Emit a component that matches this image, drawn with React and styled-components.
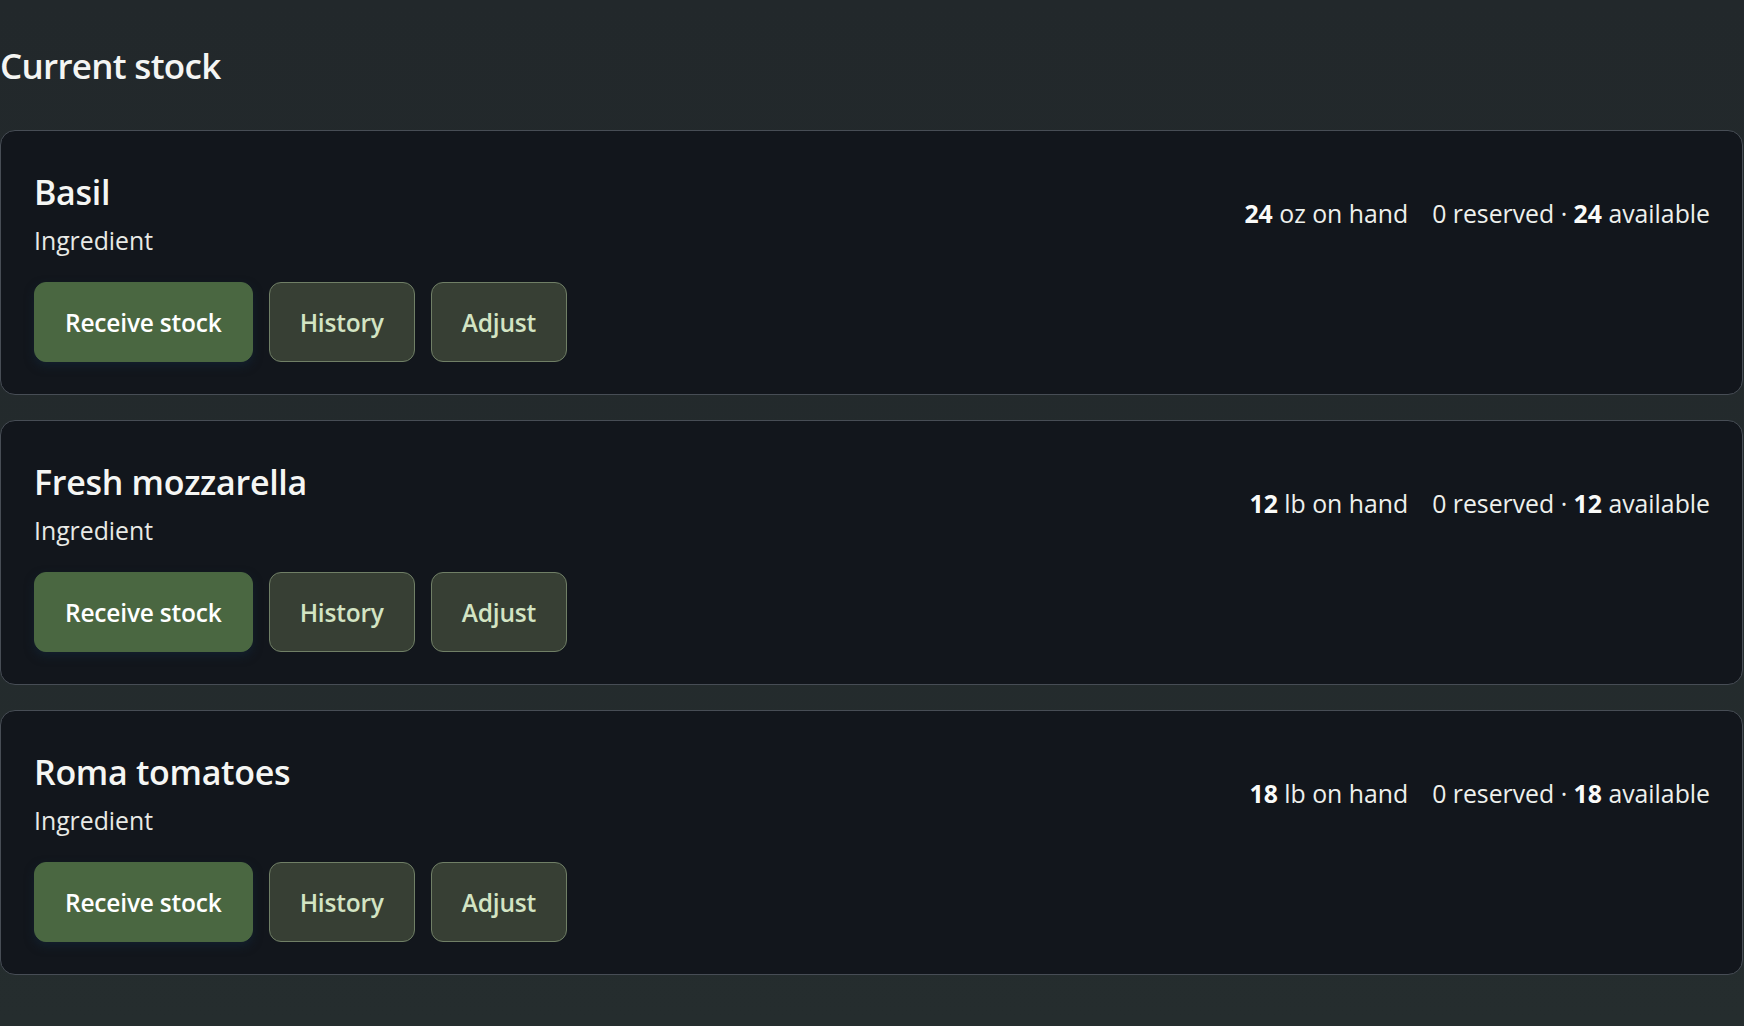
import React from 'react';
import styled, { createGlobalStyle } from 'styled-components';

const GlobalStyle = createGlobalStyle`
    html, body {
        margin: 0;
        padding: 0;
    }
    body {
        min-height: 1026px;
        background: linear-gradient(180deg, #22282b 0%, #252d2e 100%);
        font-family: "Segoe UI", "Open Sans", "Noto Sans", sans-serif;
        color: #f3f4f2;
    }
`

const Page = styled.main`
    padding: 40px 1px 40px 0;
`

const Heading = styled.h2`
    margin: 0 0 39px 0;
    font-size: 35px;
    font-weight: 600;
    line-height: 51px;
    color: #f4f5f3;
    letter-spacing: -0.7px;
`

const List = styled.div`
    display: flex;
    flex-direction: column;
    gap: 25px;
`

const Card = styled.section`
    background: #12161c;
    border: 1.5px solid #474d55;
    border-radius: 15px;
    padding: 38px 32px 32px 33px;
`

const Header = styled.div`
    display: flex;
    align-items: center;
    justify-content: space-between;
`

const NameBlock = styled.div`
    display: flex;
    flex-direction: column;
    gap: 8px;
`

const Name = styled.h3`
    margin: 0;
    font-size: 34px;
    font-weight: 600;
    line-height: 46px;
    color: #f5f6f4;
    letter-spacing: -0.3px;
`

const Kind = styled.div`
    font-size: 24.8px;
    line-height: 34px;
    color: #e8eae6;
`

const Stats = styled.div`
    display: flex;
    gap: 24px;
    font-size: 24.8px;
    line-height: 34px;
    color: #eef0ec;
    b {
        font-weight: 700;
        color: #fafbf9;
    }
`

const Actions = styled.div`
    display: flex;
    gap: 16px;
    margin-top: 25px;
`

const Button = styled.button`
    height: 80px;
    padding: 0 30px;
    border-radius: 12px;
    font-family: inherit;
    font-size: 24.5px;
    font-weight: 600;
    letter-spacing: -0.2px;
    border: 1.5px solid ${p => (p.$primary ? '#4a6741' : '#707f66')};
    background: ${p => (p.$primary ? '#4a6741' : '#373f34')};
    color: ${p => (p.$primary ? '#ffffff' : '#d3e4c3')};
    box-shadow: ${p => (p.$primary ? '0 4px 10px rgba(20, 40, 60, 0.55)' : 'none')};
    cursor: pointer;
`

const items = [
    { name: 'Basil', unit: 'oz', onHand: 24, reserved: 0 },
    { name: 'Fresh mozzarella', unit: 'lb', onHand: 12, reserved: 0 },
    { name: 'Roma tomatoes', unit: 'lb', onHand: 18, reserved: 0 },
];

const StockCard = ({ item }) => (
    <Card>
        <Header>
            <NameBlock>
                <Name>{item.name}</Name>
                <Kind>Ingredient</Kind>
            </NameBlock>
            <Stats>
                <span><b>{item.onHand}</b> {item.unit} on hand</span>
                <span>{item.reserved} reserved · <b>{item.onHand - item.reserved}</b> available</span>
            </Stats>
        </Header>
        <Actions>
            <Button $primary>Receive stock</Button>
            <Button>History</Button>
            <Button>Adjust</Button>
        </Actions>
    </Card>
)

const App = () => {
    return (
        <>
            <GlobalStyle />
            <Page>
                <Heading>Current stock</Heading>
                <List>
                    {items.map(item => (
                        <StockCard key={item.name} item={item} />
                    ))}
                </List>
            </Page>
        </>
    )
}

export default App;
